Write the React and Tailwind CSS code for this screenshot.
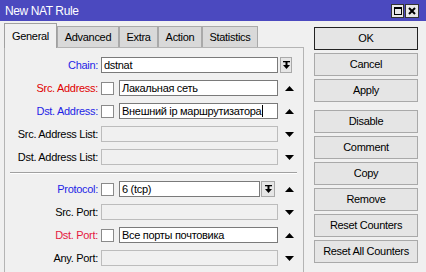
import React from 'react';

const ArrowUp = () => (
  <svg width="9" height="5" viewBox="0 0 9 5">
    <path d="M0 5 L4.5 0 L9 5 Z" fill="#000" />
  </svg>
);

const ArrowDown = () => (
  <svg width="9" height="5" viewBox="0 0 9 5">
    <path d="M0 0 L9 0 L4.5 5 Z" fill="#000" />
  </svg>
);

const DropButton = ({ w }) => (
  <div className={`flex h-4 ${w} shrink-0 items-center justify-center border border-[#a9a9a9] bg-[#e6e6e6]`}>
    <svg width="7" height="9" viewBox="0 0 7 9">
      <rect x="0" y="0" width="7" height="1.3" fill="#000" />
      <rect x="2.5" y="1" width="2" height="3" fill="#000" />
      <path d="M0 4 L7 4 L3.5 8 Z" fill="#000" />
    </svg>
  </div>
);

const Checkbox = () => <div className="h-[13px] w-[13px] shrink-0 border border-[#8a8a8a] bg-white" />;

function Field({ value, disabled, w, caret }) {
  return (
    <div
      className={`flex h-4 ${w} shrink-0 items-center overflow-hidden whitespace-nowrap border px-[2px] ${
        disabled ? 'border-[#bcbcbc] bg-[#f0f0f0]' : 'border-[#7a7a7a] bg-white'
      }`}
    >
      {value}
      {caret && <span className="ml-px inline-block h-[12px] w-px bg-black" />}
    </div>
  );
}

function Row({ label, color = 'text-black', children, arrow }) {
  return (
    <div className="flex h-4 items-center">
      <div className={`w-[93px] shrink-0 text-right ${color}`}>{label}</div>
      <div className="ml-[3px] flex w-[178px] shrink-0 items-center">{children}</div>
      <div className="flex w-[21px] shrink-0 justify-center">
        {arrow === 'up' && <ArrowUp />}
        {arrow === 'down' && <ArrowDown />}
      </div>
    </div>
  );
}

const tabs = [
  { name: 'Advanced', w: 'w-[62px]' },
  { name: 'Extra', w: 'w-[39px]' },
  { name: 'Action', w: 'w-[44px]' },
  { name: 'Statistics', w: 'w-[56px]' }
];

const buttons = ['Disable', 'Comment', 'Copy', 'Remove', 'Reset Counters', 'Reset All Counters'];

function Button({ children, primary }) {
  return (
    <div
      className={`flex h-[23px] items-center justify-center border bg-[#e5e5e5] ${
        primary ? 'border-[#222]' : 'border-[#a9a9a9]'
      }`}
    >
      {children}
    </div>
  );
}

export default function App() {
  return (
    <div className="h-[272px] w-[426px] overflow-hidden bg-[#f0f0f0] font-['Liberation_Sans',Arial,sans-serif] text-[11px] leading-none tracking-[-0.3px] text-black">
      <div className="flex h-[21px] items-center justify-between bg-[#4b49bf] pl-[5px] pr-[7px]">
        <span className="text-[12px] tracking-[-0.4px] text-white">New NAT Rule</span>
        <div className="flex gap-px">
          <div className="flex h-[14px] w-[13px] items-center justify-center border border-[#333] bg-[#e8e8e8]">
            <div className="h-[8px] w-[8px] border border-t-2 border-black" />
          </div>
          <div className="flex h-[14px] w-[14px] items-center justify-center border border-[#333] bg-[#e8e8e8]">
            <svg width="8" height="8" viewBox="0 0 8 8">
              <path d="M1 1 L7 7 M7 1 L1 7" stroke="#000" strokeWidth="2" />
            </svg>
          </div>
        </div>
      </div>

      <div className="flex">
        <div className="ml-[4px] pt-[2px]">
          <div className="flex h-[24px] items-end">
            <div className="relative z-10 -mb-px flex h-[25px] w-[53px] items-center justify-center border-x border-t border-[#a0a0a0] bg-[#f0f0f0]">
              General
            </div>
            {tabs.map((tab) => (
              <div
                key={tab.name}
                className={`flex h-[21px] ${tab.w} items-center justify-center border-x border-t border-[#a9a9a9] bg-[#d9d9d9]`}
              >
                {tab.name}
              </div>
            ))}
          </div>

          <div className="flex h-[260px] w-[300px] flex-col gap-[7px] border-x border-t border-[#b4b4b4] pt-[9px]">
            <div className="flex h-4 items-center">
              <div className="w-[93px] shrink-0 text-right text-[#1f1fe6]">Chain:</div>
              <div className="ml-[3px] flex items-center">
                <Field value="dstnat" w="w-[177px]" />
                <div className="ml-[2px]">
                  <DropButton w="w-[12px]" />
                </div>
              </div>
            </div>
            <Row label="Src. Address:" color="text-[#e00000]" arrow="up">
              <Checkbox />
              <div className="ml-[5px]">
                <Field value="Лакальная сеть" w="w-[159px]" />
              </div>
            </Row>
            <Row label="Dst. Address:" color="text-[#1f1fe6]" arrow="up">
              <Checkbox />
              <div className="ml-[5px]">
                <Field value="Внешний ip маршрутизатора" w="w-[159px]" caret />
              </div>
            </Row>
            <Row label="Src. Address List:" arrow="down">
              <Field disabled w="w-[177px]" />
            </Row>
            <Row label="Dst. Address List:" arrow="down">
              <Field disabled w="w-[177px]" />
            </Row>

            <div className="ml-[5px] mr-[6px] border-t border-b border-t-[#a0a0a0] border-b-white" />

            <Row label="Protocol:" color="text-[#1f1fe6]" arrow="up">
              <Checkbox />
              <div className="ml-[5px] flex items-center">
                <Field value="6 (tcp)" w="w-[141px]" />
                <div className="ml-[1px]">
                  <DropButton w="w-[14px]" />
                </div>
              </div>
            </Row>
            <Row label="Src. Port:" arrow="down">
              <Field disabled w="w-[177px]" />
            </Row>
            <Row label="Dst. Port:" color="text-[#e5173f]" arrow="up">
              <Checkbox />
              <div className="ml-[5px]">
                <Field value="Все порты почтовика" w="w-[159px]" />
              </div>
            </Row>
            <Row label="Any. Port:" arrow="down">
              <Field disabled w="w-[177px]" />
            </Row>
            <Row label="" arrow="down">
              <Field disabled w="w-[177px]" />
            </Row>
          </div>
        </div>

        <div className="ml-[10px] mt-[6px] flex w-[104px] flex-col gap-[3px]">
          <Button primary>OK</Button>
          <Button>Cancel</Button>
          <Button>Apply</Button>
          <div className="h-[2px]" />
          {buttons.map((b) => (
            <Button key={b}>{b}</Button>
          ))}
        </div>
      </div>
    </div>
  );
}
